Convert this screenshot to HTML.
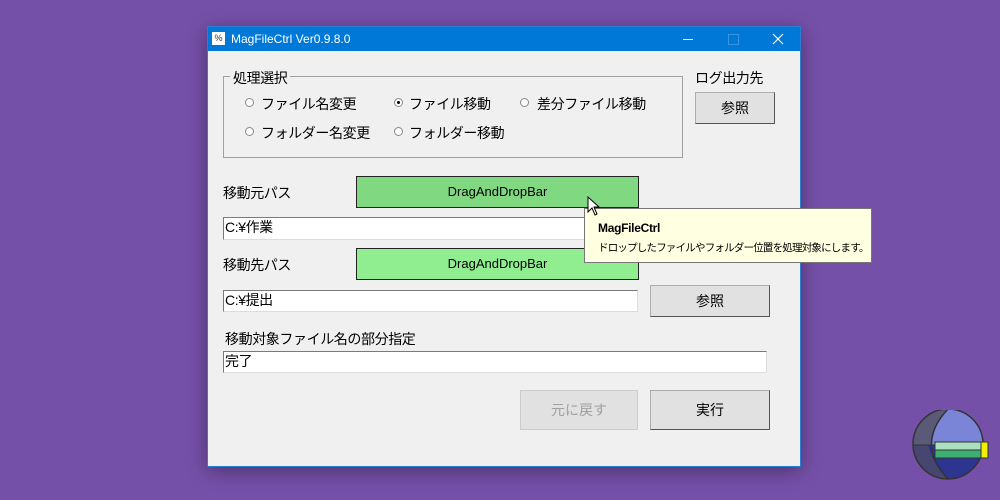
<html><head><style>
body{margin:0;width:1000px;height:500px;background:#7550a8;position:relative;overflow:hidden;font-family:"Liberation Sans","Noto Sans CJK JP",sans-serif;}
.a{position:absolute}
.win{left:207px;top:26px;width:594px;height:441px;background:#f0f0f0;box-shadow:0 4px 18px rgba(0,0,0,.35);border:1px solid #2a7fd4;box-sizing:border-box}
.tb{left:0;top:0;width:592px;height:24px;background:#0078d7;color:#fff;font-size:12px}
.t{font-size:14px;letter-spacing:-0.4px;color:#000;white-space:nowrap}
.rb{width:9px;height:9px;border-radius:50%;border:1px solid #888;background:#fff;box-sizing:border-box}
.btn{background:#e1e1e1;border:1px solid #adadad;box-sizing:border-box;border-right-color:#555;border-bottom-color:#555;text-align:center;font-size:14px}
.inp{background:#fff;border:1px solid #7a7a7a;border-right-color:#ddd;border-bottom-color:#ddd;box-sizing:border-box;font-size:14px;letter-spacing:-0.4px;line-height:19px;padding-left:1px}
.dd{border:1px solid #222;box-sizing:border-box;text-align:center;font-size:13px;line-height:29px}
</style></head><body>
<div class="a win">
 <div class="a tb">
  <div class="a" style="left:4px;top:5px;width:13px;height:13px;background:#fff;color:#333;font-size:9px;line-height:13px;text-align:center">%</div>
  <div class="a" style="left:23px;top:5px">MagFileCtrl Ver0.9.8.0</div>
  <div class="a" style="left:475px;top:12px;width:10px;height:1px;background:#fff"></div>
  <div class="a" style="left:520px;top:7px;width:9px;height:9px;border:1px solid #3b93e0"></div>
  <svg class="a" style="left:564px;top:6px" width="12" height="12"><path d="M1 1L11 11M11 1L1 11" stroke="#fff" stroke-width="1.2"/></svg>
 </div>
 <div class="a" style="left:15px;top:49px;width:458px;height:80px;border:1px solid #a0a0a0"></div>
 <div class="a t" style="left:22px;top:41px;background:#f0f0f0;padding:0 3px">処理選択</div>
 <div class="a rb" style="left:37px;top:71px"></div><div class="a t" style="left:53px;top:67px">ファイル名変更</div>
 <div class="a rb" style="left:186px;top:71px;"></div><div class="a" style="left:189px;top:74px;width:3px;height:3px;background:#000;border-radius:50%"></div><div class="a t" style="left:201px;top:67px">ファイル移動</div>
 <div class="a rb" style="left:312px;top:71px"></div><div class="a t" style="left:329px;top:67px">差分ファイル移動</div>
 <div class="a rb" style="left:37px;top:100px"></div><div class="a t" style="left:53px;top:96px">フォルダー名変更</div>
 <div class="a rb" style="left:186px;top:100px"></div><div class="a t" style="left:201px;top:96px">フォルダー移動</div>
 <div class="a t" style="left:487px;top:41px">ログ出力先</div>
 <div class="a btn" style="left:487px;top:65px;width:80px;height:32px;line-height:30px">参照</div>
 <div class="a t" style="left:15px;top:156px">移動元パス</div>
 <div class="a dd" style="left:148px;top:149px;width:283px;height:32px;background:#80d880">DragAndDropBar</div>
 <div class="a inp" style="left:15px;top:190px;width:415px;height:23px">C:¥作業</div>
 <div class="a t" style="left:15px;top:228px">移動先パス</div>
 <div class="a dd" style="left:148px;top:221px;width:283px;height:32px;background:#90ee90">DragAndDropBar</div>
 <div class="a inp" style="left:15px;top:263px;width:415px;height:22px">C:¥提出</div>
 <div class="a btn" style="left:442px;top:258px;width:120px;height:32px;line-height:30px">参照</div>
 <div class="a t" style="left:17px;top:302px">移動対象ファイル名の部分指定</div>
 <div class="a inp" style="left:15px;top:324px;width:544px;height:22px">完了</div>
 <div class="a btn" style="left:312px;top:363px;width:118px;height:40px;line-height:38px;color:#a0a0a0;border-color:#ccc">元に戻す</div>
 <div class="a btn" style="left:442px;top:363px;width:120px;height:40px;line-height:38px">実行</div>
</div>
<div class="a" style="left:584px;top:208px;width:288px;height:55px;background:#ffffe1;border:1px solid #767676;box-sizing:border-box">
 <div class="a" style="left:13px;top:12px;font-size:12px;font-weight:bold;letter-spacing:-0.3px">MagFileCtrl</div>
 <div class="a" style="left:13px;top:31px;font-size:10.5px;letter-spacing:-0.8px;white-space:nowrap">ドロップしたファイルやフォルダー位置を処理対象にします。</div>
</div>
<svg class="a" style="left:587px;top:196px" width="14" height="22"><path d="M1 1 L1 16 L5 12 L8 19 L10 18 L7 11 L12 11 Z" fill="#fff" stroke="#000" stroke-width="1"/></svg>
<svg class="a" style="left:905px;top:410px" width="95" height="90">
 <clipPath id="c"><circle cx="43" cy="34" r="35"/></clipPath>
 <g clip-path="url(#c)">
  <rect x="0" y="-5" width="90" height="40" fill="#5a5a78"/>
  <rect x="0" y="35" width="90" height="40" fill="#464670"/>
  <path d="M43 -1 Q10 34 43 69 L90 69 L90 -1 Z" fill="#7b85d8"/>
  <path d="M23 35 Q28 55 43 69 L90 69 L90 35 Z" fill="#2e3590"/>
  <path d="M43 -1 Q10 34 43 69" fill="none" stroke="#333" stroke-width="1.5"/>
  <line x1="0" y1="35" x2="30" y2="35" stroke="#333"/>
 </g>
 <circle cx="43" cy="34" r="35" fill="none" stroke="#333" stroke-width="1.5"/>
 <rect x="30" y="32" width="46" height="8" fill="#a8e0c0" stroke="#333"/>
 <rect x="30" y="40" width="46" height="8" fill="#3cb070" stroke="#333"/>
 <rect x="76" y="32" width="7" height="16" fill="#f0f000" stroke="#333"/>
</svg>
</body></html>
